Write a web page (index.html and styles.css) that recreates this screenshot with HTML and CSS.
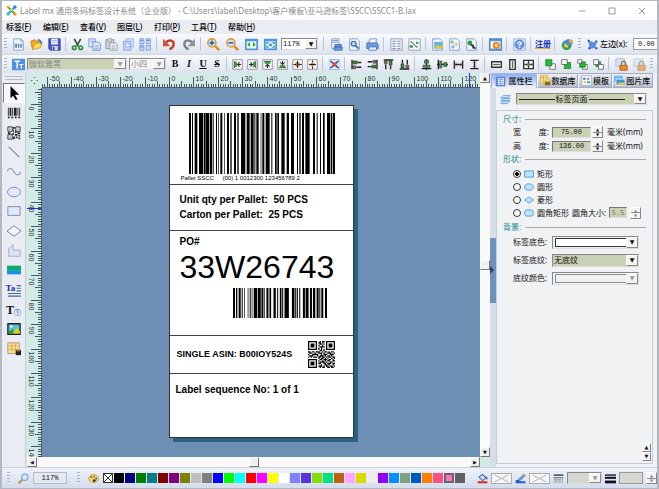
FILE: index.html
```
<!DOCTYPE html>
<html lang="zh-CN">
  <head>
    <meta charset="UTF-8" />
    <meta name="viewport" content="width=device-width, initial-scale=1.0" />
    <title>Label mx 通用条码标签设计系统</title>
    <link rel="stylesheet" href="styles.css">
  </head>
  <body>
    <svg class="sprite" aria-hidden="true">
      <symbol id="logo" viewBox="0 0 16 16"><path d="M3 3l10 10" stroke="#4caf3c" stroke-width="3"/><path d="M13 3L3 13" stroke="#2a9be8" stroke-width="3"/><circle cx="3" cy="3" r="2" fill="#f0a020"/><circle cx="13" cy="3" r="2.5" fill="#1d8fe0"/><circle cx="3" cy="13" r="2.5" fill="#48b4f0"/><circle cx="13" cy="13" r="2.5" fill="#f59a1c"/><circle cx="8" cy="7" r="2" fill="#ffd23c"/></symbol>
      <symbol id="new" viewBox="0 0 16 16"><path d="M2 1h9l3 3v11H2z" fill="#eef5ff" stroke="#7d9cc8"/><path d="M11 1v3h3" fill="#b8cdec" stroke="#7d9cc8"/><path d="M4 7v5M5.500 7v5M8 7v5M10 7v5M12 7v5" stroke="#3b5f90"/></symbol>
      <symbol id="open" viewBox="0 0 16 16"><path d="M1 4l5-2 2 2 5-1v5L3 14z" fill="#f2a526" stroke="#c67d10"/><path d="M3 14l3-7 9-2-2 7z" fill="#ffd85a" stroke="#d29a1c"/><path d="M9 2c3-1 5 0 5 3l1.500-.5L13.500 8 11 5.500h1.500C12 4 11 3 9 3z" fill="#3c86dc"/></symbol>
      <symbol id="save" viewBox="0 0 16 16"><path d="M1 1h14v14H3l-2-2z" fill="#4a58c8" stroke="#2c3aa0"/><path d="M4 1h8v7H4z" fill="#f4f6ff"/><path d="M5 3h6M5 5h6" stroke="#9aa6d8"/><path d="M5 10h7v5H5z" fill="#d6daf2"/><path d="M6 11h2v4H6z" fill="#333f98"/></symbol>
      <symbol id="cut" viewBox="0 0 16 16"><path d="M4 1l5 9M12 1L7 10" stroke="#27502c" stroke-width="2"/><circle cx="4" cy="12" r="2.200" fill="none" stroke="#2f8a34" stroke-width="2"/><circle cx="12" cy="12" r="2.200" fill="none" stroke="#2f8a34" stroke-width="2"/></symbol>
      <symbol id="copy" viewBox="0 0 16 16"><path d="M1 1h8v10H1z" fill="#dfeaff" stroke="#6c8fd0"/><path d="M6 5h7l2 2v8H6z" fill="#eff5ff" stroke="#4f7ac4"/><path d="M8 9h5M8 11h5M8 13h5M3 4h4" stroke="#6c9ae0"/></symbol>
      <symbol id="paste" viewBox="0 0 16 16"><path d="M1 2h10v11H1z" fill="#c9cdd4" stroke="#8d949e"/><path d="M4 1h4v3H4z" fill="#f2f2f2" stroke="#8d949e"/><path d="M6 6h7l2 2v7H6z" fill="#f4f5f7" stroke="#8d949e"/><path d="M8 9h5M8 11h5M8 13h5" stroke="#a6adb6"/></symbol>
      <symbol id="cards" viewBox="0 0 16 16"><path d="M5 1h9v10H5z" fill="#dce8ff" stroke="#8cabe4"/><path d="M2 4h9v11H2z" fill="#c0d5fa" stroke="#7f9fdd"/><circle cx="7" cy="9" r="2.500" fill="#fff" stroke="#7f9fdd"/></symbol>
      <symbol id="array" viewBox="0 0 16 16"><path d="M1 1h5v6H1zM9 1h5v6H9zM1 9h5v6H1zM9 9h5v6H9z" fill="#cadcff" stroke="#6f93d8"/><path d="M2 3h3M10 3h3M2 11h3" stroke="#3f6cc0"/></symbol>
      <symbol id="undo" viewBox="0 0 16 16"><path d="M3 6c4-5 11-3 10 2 0 3-3 5-5 6" fill="none" stroke="#c0402c" stroke-width="3"/><path d="M0 1v9h9z" fill="#d0523a"/></symbol>
      <symbol id="redo" viewBox="0 0 16 16"><path d="M13 6C9 1 2 3 3 8c0 3 3 5 5 6" fill="none" stroke="#7c838c" stroke-width="3"/><path d="M16 1v9H7z" fill="#8c949c"/></symbol>
      <symbol id="zin" viewBox="0 0 16 16"><path d="M9 9l6 6" stroke="#e08a28" stroke-width="3"/><circle cx="6" cy="6" r="5" fill="#cfe5fa" stroke="#e69a34" stroke-width="2"/><path d="M3 6h6M6 3v6" stroke="#2c62b0" stroke-width="2"/></symbol>
      <symbol id="zout" viewBox="0 0 16 16"><path d="M9 9l6 6" stroke="#e08a28" stroke-width="3"/><circle cx="6" cy="6" r="5" fill="#cfe5fa" stroke="#e69a34" stroke-width="2"/><path d="M3 6h6" stroke="#2c62b0" stroke-width="2"/></symbol>
      <symbol id="fitw" viewBox="0 0 16 16"><path d="M0 1h16v14H0z" fill="#4b94e4"/><path d="M2 4h12v9H2z" fill="#e8f8e8"/><path d="M3 8l3-3v6zM13 8l-3-3v6z" fill="#1d9a3c"/></symbol>
      <symbol id="fitp" viewBox="0 0 16 16"><path d="M0 1h16v14H0z" fill="#4b94e4"/><path d="M2 4h12v9H2z" fill="#d8ecff"/><path d="M3 5h3L3 8zM13 5h-3l3 3zM3 12h3L3 9zM13 12h-3l3-3z" fill="#1d9a3c"/><path d="M6 7h4v3H6z" fill="#4b94e4"/></symbol>
      <symbol id="setup" viewBox="0 0 16 16"><path d="M2 1h9v12H2z" fill="#f0f5ff" stroke="#7396ce"/><path d="M3 3h7M3 5h7" stroke="#6489c4"/><path d="M6 8h8v3H6zM5 11h10v4H5z" fill="#6c9ce0" stroke="#456fb4"/></symbol>
      <symbol id="preview" viewBox="0 0 16 16"><path d="M2 1h9l3 3v11H2z" fill="#f0f5ff" stroke="#7396ce"/><circle cx="7" cy="7" r="3" fill="#b8d4fa" stroke="#3c6cb4" stroke-width="1.500"/><path d="M9 9l4 4" stroke="#3c6cb4" stroke-width="2"/></symbol>
      <symbol id="print" viewBox="0 0 16 16"><path d="M5 1h8l-1 6H3z" fill="#f4f9ff" stroke="#5a84c4"/><path d="M1 6h13l1 3v4H1z" fill="#6b9de4" stroke="#3f69ae"/><path d="M4 11h9v4H3z" fill="#e8f2ff" stroke="#4d78bc"/></symbol>
      <symbol id="list" viewBox="0 0 16 16"><path d="M1 1h14v14H1z" fill="#f3f6fc" stroke="#7d90bc"/><path d="M3 4h4M3 7h4M3 10h4M3 13h4M9 4h4M9 7h4M9 10h4M9 13h4" stroke="#5d6f98"/></symbol>
      <symbol id="link" viewBox="0 0 16 16"><path d="M1 1h14v14H1z" fill="#f6f8fc" stroke="#8794b4"/><path d="M3 5h2l5 6h2" stroke="#222" fill="none"/><path d="M10 4l4 2-4 2zM2 9h4v3H2z" fill="#2ca43a"/></symbol>
      <symbol id="docpic" viewBox="0 0 16 16"><path d="M2 1h9l3 3v11H2z" fill="#e8f1ff" stroke="#7396ce"/><path d="M4 5h10v8H4z" fill="#58b4d8"/><path d="M4 13l4-5 3 2 3-2v5z" fill="#e6c240"/></symbol>
      <symbol id="docgrid" viewBox="0 0 16 16"><path d="M2 1h9l3 3v11H2z" fill="#f6faff" stroke="#7396ce"/><circle cx="5" cy="5" r="1.500" fill="none" stroke="#3aa450"/><circle cx="10" cy="8" r="1.500" fill="none" stroke="#dd9a2c"/><circle cx="6" cy="11" r="1.500" fill="none" stroke="#3a86d4"/></symbol>
      <symbol id="doctool" viewBox="0 0 16 16"><path d="M2 1h9l3 3v11H2z" fill="#eef4ff" stroke="#7396ce"/><circle cx="6" cy="6" r="3" fill="#2f9a3a"/><path d="M7 8l6 5M10 8v5" stroke="#333" stroke-width="2"/></symbol>
      <symbol id="window" viewBox="0 0 16 16"><path d="M0 1h16v14H0z" fill="#5d9ae8" stroke="#386cb8"/><path d="M2 4h12v9H2z" fill="#fff"/><circle cx="9" cy="9" r="3.500" fill="#ffd070" stroke="#e8861c" stroke-width="2"/></symbol>
      <symbol id="help" viewBox="0 0 16 16"><path d="M1 1h14v14H1z" fill="#e0ecfc" stroke="#86a6d8"/><circle cx="8" cy="8" r="5.500" fill="#6c9ee8" stroke="#3f72c0"/><path d="M6 7c0-3 4.500-2.500 4 0L8 8.500V10M8 11v1.500" stroke="#fff" stroke-width="1.500" fill="none"/></symbol>
      <symbol id="ie" viewBox="0 0 16 16"><circle cx="7" cy="9" r="6" fill="#3a9c4a"/><path d="M4 7c3-3 6-2 7 0l-3 5-4-1z" fill="#f0d040"/><path d="M2 5L9 1l6 5-5 4z" fill="#3c8ed8"/><circle cx="12" cy="4" r="2.500" fill="#f2a42c"/></symbol>
      <symbol id="pos" viewBox="0 0 16 16"><path d="M2 3l12 2-2 8-8 1z" fill="#5a8ee4"/><path d="M1 1h3v3H1zM12 2h3v3h-3zM2 12h3v3H2zM12 12h3v3h-3z" fill="#27509e"/></symbol>
      <symbol id="font" viewBox="0 0 16 16"><path d="M0 1h16v14H0z" fill="#4d8fe8"/><path d="M3 4h7M6.500 4v9" stroke="#fff" stroke-width="2"/><path d="M9 8h5M11.500 8v5" stroke="#fff" stroke-width="1.500"/></symbol>

      <symbol id="al" viewBox="0 0 16 16"><path d="M1 1h14v14H1z" fill="#f4f4f4" stroke="#777"/><path d="M3.500 3v10" stroke="#111"/><path d="M4 4h3v8H4z" fill="#2a9d35"/><path d="M13 8H9M11 5L8 8l3 3" stroke="#222" stroke-width="1.500" fill="none"/></symbol>
      <symbol id="at" viewBox="0 0 16 16"><path d="M1 1h14v14H1z" fill="#f4f4f4" stroke="#777"/><path d="M3 3.500h10" stroke="#111"/><path d="M4 4h8v3H4z" fill="#2a9d35"/><path d="M8 13V9M5 11l3-3 3 3" stroke="#222" stroke-width="1.500" fill="none"/></symbol>
      <symbol id="ac" viewBox="0 0 16 16"><path d="M1 1h14v14H1z" fill="#f4f4f4" stroke="#777"/><path d="M5 5h6v6H5z" fill="#c87a40"/><path d="M8 3v10M2 8h4M10 8h4" stroke="#222" stroke-width="1.500"/></symbol>
      <symbol id="am" viewBox="0 0 16 16"><path d="M1 1h14v14H1z" fill="#f4f4f4" stroke="#777"/><path d="M5 6h6v4H5z" fill="#c87a40"/><path d="M3 8h10M8 2v3M8 11v3" stroke="#222" stroke-width="1.500"/></symbol>
      <symbol id="center" viewBox="0 0 16 16"><path d="M0 1h16v14H0z" fill="#e6efff" stroke="#8095c8"/><path d="M5 5h6v6H5z" fill="#d8503c"/><path d="M2 3l4 3M14 3l-4 3M2 13l4-3M14 13l-4-3" stroke="#2444a4" stroke-width="2"/></symbol>
      <symbol id="dl" viewBox="0 0 16 16"><path d="M1.500 1v14" stroke="#222" stroke-width="2"/><path d="M3 3h6v4H3z" fill="#2a8f35" stroke="#333"/><path d="M3 10h4v4H3z" fill="#b86b4b" stroke="#333"/><path d="M15 5h-5M15 12H8" stroke="#222" stroke-width="2"/></symbol>
      <symbol id="dm" viewBox="0 0 16 16"><path d="M8 0v16M1 14h14" stroke="#222" stroke-width="2"/><path d="M5 2h6v4H5z" fill="#2a9d35" stroke="#444"/><path d="M3 9h10v3H3z" fill="#35a840" stroke="#444"/></symbol>
      <symbol id="gap" viewBox="0 0 16 16"><path d="M2 2v12M14 2v12M3 8h10" stroke="#222" stroke-width="2"/><path d="M6 5L3 8l3 3M10 5l3 3-3 3" stroke="#b86048" fill="none"/></symbol>
      <symbol id="sw" viewBox="0 0 16 16"><path d="M1 4h14v8H1z" fill="#fff" stroke="#333" stroke-width="2"/><path d="M3 8h10" stroke="#46784a" stroke-width="2"/></symbol>
      <symbol id="sb" viewBox="0 0 16 16"><path d="M1 2h14v12H1z" fill="#fff" stroke="#333" stroke-width="2"/><path d="M2 8h12M8 2v12" stroke="#333" stroke-width="2"/><path d="M6 6h4v4H6z" fill="#56885a"/></symbol>
      <symbol id="front" viewBox="0 0 16 16"><path d="M7 7h8v8H7z" fill="#fff" stroke="#444"/><path d="M1 1h9v9H1z" fill="#25bb35" stroke="#167820"/></symbol>
      <symbol id="back" viewBox="0 0 16 16"><path d="M5 5h9v9H5z" fill="#25bb35" stroke="#167820"/><path d="M1 1h8v7H1z" fill="#fff" stroke="#444"/></symbol>
      <symbol id="mid" viewBox="0 0 16 16"><path d="M8 8h7v7H8z" fill="#fff" stroke="#444"/><path d="M4 4h8v8H4z" fill="#25bb35" stroke="#167820"/><path d="M1 1h6v5H1z" fill="#fff" stroke="#444"/></symbol>
      <symbol id="down" viewBox="0 0 16 16"><path d="M4 4h7v7H4z" fill="#25bb35" stroke="#167820"/><path d="M8 8h7v7H8z" fill="#fff" stroke="#444"/><path d="M1 1h7v7H1z" fill="#fff" stroke="#444"/></symbol>
      <symbol id="lock" viewBox="0 0 16 16"><path d="M1 1h11v9H1z" fill="#d4e1fa" stroke="#9db4e0"/><path d="M8 9V7c0-4 5-4 5 0v2" fill="none" stroke="#9a6a20" stroke-width="1.500"/><path d="M6 9h9v6H6z" fill="#e58a24" stroke="#a85e10"/></symbol>

      <symbol id="cursor" viewBox="0 0 16 16"><path d="M4 0v14l3-3 3 5 2-1-3-5h5z"/></symbol>
      <symbol id="bar" viewBox="0 0 16 16"><path d="M1 2h1v9H1zM3 2h2v9H3zM6 2h1v9H6zM8 2h3v9H8zM12 2h1v9h-1zM14 2h1v9h-1zM1 12h2v2H1zM5 12h2v2H5zM9 12h2v2H9zM13 12h2v2h-2z" fill="#222"/></symbol>
      <symbol id="qrt" viewBox="0 0 16 16"><path d="M1 1h5v5H1zM10 1h5v5h-5zM1 10h5v5H1z" fill="none" stroke="#222"/><path d="M3 3h1v1H3zM12 3h1v1h-1zM3 12h1v1H3zM7 1h2v2H7zM7 4h1v3H7zM9 6h2v2H9zM1 7h3v2H1zM12 7h3v2h-3zM6 8h2v2H6zM9 9h3v2H9zM13 10h2v2h-2zM7 12h2v3H7zM10 12h2v2h-2zM13 13h2v2h-2z" fill="#222"/></symbol>
      <symbol id="line" viewBox="0 0 16 16"><path d="M2 2l12 12" stroke="#55749c" stroke-width="1.200"/></symbol>
      <symbol id="curve" viewBox="0 0 16 16"><path d="M0 7c4-6 6-2 8 1s4 6 8 0" fill="none" stroke="#7d93b8" stroke-width="1.200"/></symbol>
      <symbol id="oval" viewBox="0 0 16 16"><ellipse cx="8" cy="8" rx="7.400" ry="5.400" fill="#e0e9fc" stroke="#7185a8"/></symbol>
      <symbol id="rect" viewBox="0 0 16 16"><path d="M1 3h14v10H1z" fill="#dfe8fc" stroke="#7185a8"/></symbol>
      <symbol id="diamond" viewBox="0 0 16 16"><path d="M8 2l8 6-8 6-8-6z" fill="#f2f6fc" stroke="#60789c"/></symbol>
      <symbol id="poly" viewBox="0 0 16 16"><path d="M2 5l5-4v6h8v7H2z" fill="#dce4f6" stroke="#98a8cc"/></symbol>
      <symbol id="fillrect" viewBox="0 0 16 16"><path d="M0 3h16v6H0z" fill="#10a878"/><path d="M0 9h16v4H0z" fill="#1490e8"/></symbol>
      <symbol id="pict" viewBox="0 0 16 16"><path d="M1 2h14v12H1z" fill="#4cc4dc" stroke="#222" stroke-width="1.500"/><path d="M2 13l3-5 3 3 3-5 4 5v2z" fill="#e4cc1c"/><path d="M2 11l5-3v5H2z" fill="#2c8a40"/><circle cx="5" cy="5" r="1.500" fill="#f7f7c0"/></symbol>
      <symbol id="table" viewBox="0 0 16 16"><path d="M1 1h13v12H1z" fill="#fce6b0" stroke="#b08c44"/><path d="M2 4.500h11M2 8.500h11M5.500 2v10M9.500 2v10" stroke="#dda23c"/><path d="M10 9h6v6h-6z" fill="#222"/><path d="M11 10h4" stroke="#d8c840"/></symbol>
      <symbol id="richtext" viewBox="0 0 16 16"><path d="M11 3h5M11 6h5M11 9h5M1 12h15M1 15h15" stroke="#4a6c98" stroke-width="1.200"/></symbol>

      <symbol id="prop" viewBox="0 0 16 16"><path d="M1 1h14v14H1z" fill="#5a86d8"/><path d="M4 3h9v10H4z" fill="#dbe8ff"/><path d="M5 5h7M5 8h7M5 11h7M8 3v10" stroke="#6f9be4"/></symbol>
      <symbol id="db" viewBox="0 0 16 16"><path d="M1 1h10v11H1z" fill="#ffe9a4" stroke="#d09a28"/><path d="M1 4h10M5 1v11" stroke="#d09a28"/><path d="M7 7h8v8H7z" fill="#8a6c20"/><ellipse cx="11" cy="8" rx="4" ry="2" fill="#f0d458"/></symbol>
      <symbol id="tpl" viewBox="0 0 16 16"><path d="M1 1h14v14H1z" fill="#fff" stroke="#7fa4e0"/><path d="M3 4h4v3H3z" fill="#3c8cec"/><path d="M9 4h3v3H9z" fill="#e05c4c"/><path d="M4 9h3v3H4z" fill="#f0b030"/><path d="M9 9h4v3H9z" fill="#3ca454"/></symbol>
      <symbol id="gal" viewBox="0 0 16 16"><path d="M0 1h13v9H0z" fill="#6bbcf2"/><path d="M3 6h13v9H3z" fill="#3f92dc" stroke="#fff"/><path d="M4 14l4-4 3 2 4-2v4z" fill="#f4d23c"/></symbol>
      <symbol id="layers" viewBox="0 0 16 16"><path d="M5 2h10l-4 4H1zM5 6h10l-4 4H1zM5 10h10l-4 4H1z" fill="#c4e0fc" stroke="#4c92dc"/></symbol>
      <symbol id="s-rect" viewBox="0 0 16 12"><path d="M1 1h14v10H1z" fill="#bfe2fd" stroke="#45a0ea" stroke-width="1.500"/></symbol>
      <symbol id="s-oval" viewBox="0 0 16 12"><ellipse cx="8" cy="6" rx="7" ry="5" fill="#bfe2fd" stroke="#45a0ea" stroke-width="1.500"/></symbol>
      <symbol id="s-dia" viewBox="0 0 16 12"><path d="M8 1l7 5-7 5-7-5z" fill="#bfe2fd" stroke="#45a0ea" stroke-width="1.500"/></symbol>
      <symbol id="s-round" viewBox="0 0 16 12"><rect x="1" y="1" width="14" height="10" rx="4" fill="#bfe2fd" stroke="#45a0ea" stroke-width="1.500"/></symbol>

      <symbol id="glass" viewBox="0 0 16 16"><path d="M1 15l6-6" stroke="#c98a4c" stroke-width="3"/><circle cx="10" cy="6" r="4.500" fill="#d4eafc" stroke="#6a9ed8" stroke-width="1.500"/></symbol>
      <symbol id="palette" viewBox="0 0 16 16"><ellipse cx="8" cy="8" rx="7" ry="6" fill="#f8d868" stroke="#c08c30"/><circle cx="5" cy="6" r="1.500" fill="#d83c2c"/><circle cx="9" cy="5" r="1.500" fill="#3c9c3c"/><circle cx="12" cy="8" r="1.500" fill="#3464c8"/><circle cx="9" cy="11" r="2" fill="#222"/></symbol>
      <symbol id="bucket" viewBox="0 0 16 16"><path d="M3 6l5-4 5 5-5 4z" fill="#dce8f8" stroke="#3462a8" stroke-width="1.500"/><path d="M13 5l2 4" stroke="#2c62b4" stroke-width="2"/><path d="M1 12h14v3H1z" fill="#e02818"/></symbol>
      <symbol id="pen" viewBox="0 0 16 16"><path d="M4 10l9-8 2 2-9 8z" fill="#6eaee8" stroke="#345c98"/><path d="M11 2l3-1 1 3-2 2z" fill="#e0a050"/><path d="M1 10h5v2h9v3H1z" fill="#1c5cc4"/></symbol>
      <symbol id="dashes" viewBox="0 0 16 16"><path d="M1 3h14" stroke="#333" stroke-width="2"/><path d="M1 7h14" stroke="#333" stroke-dasharray="3 1" stroke-width="1.500"/><path d="M1 10h14M1 13h14" stroke="#555" stroke-dasharray="1 1" stroke-width="1.500"/></symbol>
      <symbol id="thick" viewBox="0 0 16 16"><path d="M0 3h16" stroke="#112" stroke-width="2"/><path d="M0 7h16" stroke="#112" stroke-width="3"/><path d="M0 13h16" stroke="#112" stroke-width="4"/></symbol>
    </svg>

    <div class="app">
      <header class="titlebar">
        <svg class="logo"><use href="#logo" /></svg>
        <h1>Label mx 通用条码标签设计系统（企业版） - C:\Users\label\Desktop\客户模板\亚马逊标签\SSCC\SSCC1-B.lax</h1>
        <div class="winbtns">
          <button aria-label="最小化"><svg viewBox="0 0 8 8"><path d="M1 4h6" /></svg></button>
          <button aria-label="最大化"><svg viewBox="0 0 8 8"><path d="M1 1h6v6H1z" /></svg></button>
          <button aria-label="关闭"><svg viewBox="0 0 8 8"><path d="M1 1l6 6M7 1L1 7" /></svg></button>
        </div>
      </header>

      <nav class="menu">
        <a href="#">标签(<u>F</u>)</a>
        <a href="#">编辑(<u>E</u>)</a>
        <a href="#">查看(<u>V</u>)</a>
        <a href="#">图层(<u>L</u>)</a>
        <a href="#">打印(<u>P</u>)</a>
        <a href="#">工具(<u>T</u>)</a>
        <a href="#">帮助(<u>H</u>)</a>
      </nav>

      <div class="toolbar">
        <i class="grip"></i>
        <div class="group">
          <button aria-label="新建"><svg><use href="#new" /></svg></button>
          <button aria-label="打开"><svg><use href="#open" /></svg></button>
          <button aria-label="保存"><svg><use href="#save" /></svg></button>
        </div>
        <div class="group snug">
          <button aria-label="剪切"><svg><use href="#cut" /></svg></button>
          <button aria-label="复制"><svg><use href="#copy" /></svg></button>
          <button aria-label="粘贴"><svg><use href="#paste" /></svg></button>
          <button aria-label="多重复制"><svg><use href="#cards" /></svg></button>
          <button aria-label="阵列"><svg><use href="#array" /></svg></button>
        </div>
        <div class="group wide">
          <button aria-label="撤销"><svg><use href="#undo" /></svg></button>
          <button aria-label="重做"><svg><use href="#redo" /></svg></button>
        </div>
        <div class="group wide">
          <button aria-label="放大"><svg><use href="#zin" /></svg></button>
          <button aria-label="缩小"><svg><use href="#zout" /></svg></button>
          <button aria-label="适合宽度"><svg><use href="#fitw" /></svg></button>
          <button aria-label="适合页面"><svg><use href="#fitp" /></svg></button>
          <span class="combo zoom"><select aria-label="缩放"><option>117%</option></select></span>
        </div>
        <div class="group">
          <button aria-label="页面设置"><svg><use href="#setup" /></svg></button>
          <button aria-label="打印预览"><svg><use href="#preview" /></svg></button>
          <button aria-label="打印"><svg><use href="#print" /></svg></button>
        </div>
        <div class="group">
          <button aria-label="数据列表"><svg><use href="#list" /></svg></button>
          <button aria-label="数据连接"><svg><use href="#link" /></svg></button>
        </div>
        <div class="group snug">
          <button aria-label="导出图片"><svg><use href="#docpic" /></svg></button>
          <button aria-label="网格"><svg><use href="#docgrid" /></svg></button>
          <button aria-label="选项"><svg><use href="#doctool" /></svg></button>
        </div>
        <div class="group"><button aria-label="窗口"><svg><use href="#window" /></svg></button></div>
        <div class="group"><button aria-label="帮助"><svg><use href="#help" /></svg></button></div>
        <div class="group"><button class="reg">注册</button></div>
        <div class="group"><button aria-label="网站"><svg><use href="#ie" /></svg></button></div>
        <div class="posbar">
          <i class="grip"></i>
          <svg><use href="#pos" /></svg>
          <label for="left">左边(x):</label>
          <input id="left" type="text" value="0.00 mm" />
        </div>
      </div>

      <div class="toolbar second">
        <i class="grip"></i>
        <div class="group">
          <button aria-label="字体"><svg><use href="#font" /></svg></button>
          <span class="combo face"><select aria-label="字体名称" disabled><option>微软雅黑</option></select></span>
          <span class="combo size"><select aria-label="字号" disabled><option>小四</option></select></span>
          <button class="fmt"><b>B</b></button>
          <button class="fmt"><b><i>I</i></b></button>
          <button class="fmt"><b><u>U</u></b></button>
          <button class="fmt"><b><s>S</s></b></button>
        </div>
        <div class="group tight">
          <button aria-label="左对齐"><svg><use href="#al" /></svg></button>
          <button aria-label="右对齐"><svg class="r180"><use href="#al" /></svg></button>
          <button aria-label="顶对齐"><svg><use href="#at" /></svg></button>
          <button aria-label="底对齐"><svg class="r180"><use href="#at" /></svg></button>
          <button aria-label="水平居中"><svg><use href="#ac" /></svg></button>
          <button aria-label="垂直居中"><svg><use href="#am" /></svg></button>
        </div>
        <div class="group small"><button aria-label="页面居中"><svg><use href="#center" /></svg></button></div>
        <div class="group small">
          <button aria-label="靠左"><svg><use href="#dl" /></svg></button>
          <button aria-label="靠右"><svg class="r180"><use href="#dl" /></svg></button>
          <button aria-label="靠上"><svg class="r90"><use href="#dl" /></svg></button>
          <button aria-label="靠下"><svg class="r270"><use href="#dl" /></svg></button>
        </div>
        <div class="group small">
          <button aria-label="中线对齐"><svg><use href="#dm" /></svg></button>
          <button aria-label="横中线对齐"><svg class="r90"><use href="#dm" /></svg></button>
          <button aria-label="水平间距"><svg><use href="#gap" /></svg></button>
          <button aria-label="垂直间距"><svg class="r90"><use href="#gap" /></svg></button>
        </div>
        <div class="group small">
          <button aria-label="等宽"><svg><use href="#sw" /></svg></button>
          <button aria-label="等高"><svg class="r90"><use href="#sw" /></svg></button>
          <button aria-label="等大"><svg><use href="#sb" /></svg></button>
        </div>
        <div class="group small">
          <button aria-label="置顶"><svg><use href="#front" /></svg></button>
          <button aria-label="置底"><svg><use href="#back" /></svg></button>
          <button aria-label="上移一层"><svg><use href="#mid" /></svg></button>
          <button aria-label="下移一层"><svg><use href="#down" /></svg></button>
        </div>
        <div class="group">
          <button aria-label="锁定"><svg><use href="#lock" /></svg></button>
          <button aria-label="解锁"><svg class="dim"><use href="#lock" /></svg></button>
        </div>
        <i class="grip"></i>
      </div>

      <main class="work">
        <aside class="toolbox">
          <i class="handle"></i>
          <button class="on" aria-label="选择"><svg><use href="#cursor" /></svg></button>
          <button aria-label="条码"><svg><use href="#bar" /></svg></button>
          <button aria-label="二维码"><svg><use href="#qrt" /></svg></button>
          <button aria-label="直线"><svg><use href="#line" /></svg></button>
          <button aria-label="曲线"><svg><use href="#curve" /></svg></button>
          <button aria-label="椭圆"><svg><use href="#oval" /></svg></button>
          <button aria-label="矩形"><svg><use href="#rect" /></svg></button>
          <button aria-label="菱形"><svg><use href="#diamond" /></svg></button>
          <button aria-label="多边形"><svg><use href="#poly" /></svg></button>
          <button aria-label="填充"><svg><use href="#fillrect" /></svg></button>
          <button class="rich"><svg><use href="#richtext" /></svg><span>Ta</span></button>
          <button class="plain">T<small>①</small></button>
          <button aria-label="图片"><svg><use href="#pict" /></svg></button>
          <button aria-label="表格"><svg><use href="#table" /></svg></button>
        </aside>

        <section class="editor">
          <div class="corner">⁘</div>
          <svg class="hruler" id="hruler"></svg>
          <svg class="vruler" id="vruler"></svg>
          <div class="canvas">
            <article class="sheet">
              <div class="sec sscc">
                <svg id="code1" class="code1" viewBox="0 0 438 10" preserveAspectRatio="none"></svg>
                <p><small>Pallet SSCC</small><span>(00) 1 0012300 123456789 2</span></p>
              </div>
              <div class="sec qty">
                <p>Unit qty per Pallet:&nbsp; 50 PCS</p>
                <p>Carton per Pallet:&nbsp; 25 PCS</p>
              </div>
              <div class="sec po">
                <p>PO#</p>
                <strong>33W26743</strong>
                <svg id="code2" class="code2" viewBox="0 0 281 10" preserveAspectRatio="none"></svg>
              </div>
              <div class="sec asin">
                <p>SINGLE ASIN: B00IOY524S</p>
                <svg id="qr" class="qr" viewBox="0 0 21 21"></svg>
              </div>
              <div class="sec seq"><p>Label sequence No: 1 of 1</p></div>
            </article>
          </div>
          <div class="vscroll">
            <button class="up" aria-label="向上"></button>
            <i class="thumb"></i>
            <button class="down" aria-label="向下"></button>
          </div>
          <div class="hscroll">
            <button class="left" aria-label="向左"></button>
            <i class="thumb"></i>
            <button class="right" aria-label="向右"></button>
          </div>
        </section>

        <div class="splitter"><button aria-label="收起"></button></div>

        <aside class="panel">
          <div class="tabs">
            <button class="on"><svg><use href="#prop" /></svg>属性栏</button>
            <button><svg><use href="#db" /></svg>数据库</button>
            <button><svg><use href="#tpl" /></svg>模板</button>
            <button><svg><use href="#gal" /></svg>图片库</button>
          </div>
          <div class="pages">
            <svg><use href="#layers" /></svg>
            <span class="combo"><select aria-label="对象"><option>标签页面</option></select></span>
          </div>
          <form class="props">
            <h2>尺寸:</h2>
            <div class="row">
              <label for="w"><span>宽</span><span>度:</span></label>
              <input id="w" type="text" value="75.00" /><i class="spin"></i>
              <span class="unit">毫米(mm)</span>
            </div>
            <div class="row">
              <label for="h"><span>高</span><span>度:</span></label>
              <input id="h" type="text" value="136.00" /><i class="spin"></i>
              <span class="unit">毫米(mm)</span>
            </div>
            <h2>形状:</h2>
            <div class="shapes">
              <label><input type="radio" name="shape" checked /><svg><use href="#s-rect" /></svg>矩形</label>
              <label><input type="radio" name="shape" /><svg><use href="#s-oval" /></svg>圆形</label>
              <label><input type="radio" name="shape" /><svg><use href="#s-dia" /></svg>菱形</label>
              <div class="round">
                <label><input type="radio" name="shape" /><svg><use href="#s-round" /></svg>圆角矩形</label>
                <label for="rad">圆角大小:</label>
                <input id="rad" type="text" value="5.5" disabled /><i class="spin"></i>
              </div>
            </div>
            <h2>背景:</h2>
            <div class="row back">
              <label for="bc">标签底色:</label>
              <span class="combo white"><select id="bc"><option></option></select></span>
            </div>
            <div class="row back">
              <label for="bt">标签底纹:</label>
              <span class="combo"><select id="bt"><option>无底纹</option></select></span>
            </div>
            <div class="row back">
              <label for="tc">底纹颜色:</label>
              <span class="combo white off"><select id="tc" disabled><option></option></select></span>
            </div>
            <i class="pager"></i>
          </form>
        </aside>
      </main>

      <footer class="status">
        <i class="grip"></i>
        <svg><use href="#glass" /></svg>
        <output class="pct">117%</output>
        <i class="grip"></i>
        <svg><use href="#palette" /></svg>
        <div class="swatches" id="swatches"></div>
        <div class="strokes">
          <svg><use href="#bucket" /></svg>
          <svg class="none" viewBox="0 0 22 10" preserveAspectRatio="none"><path d="M3 1l16 8M19 1L3 9" /></svg>
          <svg><use href="#pen" /></svg>
          <svg class="none" viewBox="0 0 22 10" preserveAspectRatio="none"><path d="M3 1l16 8M19 1L3 9" /></svg>
          <svg><use href="#dashes" /></svg>
          <span class="combo"><select aria-label="线型" disabled><option></option></select></span>
          <svg><use href="#thick" /></svg>
          <input type="text" aria-label="线宽" disabled /><i class="spin"></i>
        </div>
      </footer>
    </div>
    <script src="app.js"></script>
  </body>
</html>
```
FILE: styles.css
```
* {
  box-sizing: border-box;
}
html {
  font-size: 8px;
}
body {
  margin: 0;
  font-family: "Noto Sans", "Noto Sans CJK SC", sans-serif;
  font-size: 8px;
  line-height: 10px;
  color: #111;
  background: #fff;
}
button,
input,
select {
  margin: 0;
  padding: 0;
  border: 0;
  border-radius: 0;
  background: none;
  font: inherit;
  color: inherit;
  outline: none;
}
select {
  appearance: none;
}
h1,
h2,
p {
  margin: 0;
  font-size: inherit;
}
h1,
h2 {
  font-weight: normal;
}
svg {
  flex: none;
  display: block;
}
.sprite {
  position: absolute;
  width: 0;
  height: 0;
}
.app {
  display: flex;
  flex-direction: column;
  height: 100vh;
  border: 1px solid #b4b8be;
  border-width: 1px 2px;
}

/* title and menu */
.titlebar {
  display: flex;
  align-items: center;
  height: 19px;
  padding-left: 4px;
  background: #fff;
  color: #8a8a8a;
}
.titlebar .logo {
  width: 11px;
  height: 11px;
}
.titlebar h1 {
  flex: 1;
  margin-left: 3px;
  white-space: nowrap;
}
.winbtns {
  display: flex;
}
.winbtns button {
  width: 30px;
}
.winbtns svg {
  width: 8px;
  height: 8px;
  margin: 0 auto;
  fill: none;
  stroke: #999;
}
.menu {
  display: flex;
  align-items: center;
  gap: 11px;
  height: 14px;
  padding-left: 4px;
  background: #e9ecf1;
  font-weight: 500;
}
.menu a {
  width: 26px;
  white-space: nowrap;
  color: #000;
  text-decoration: none;
}

/* toolbars */
.toolbar {
  display: flex;
  align-items: center;
  height: 20px;
  background: linear-gradient(#f8fafd, #dde3ee);
  overflow: hidden;
}
.toolbar.second {
  height: 19px;
  border-top: 1px solid #d3dae6;
}
.grip {
  flex: none;
  width: 3px;
  height: 12px;
  margin: 0 2px;
  background: repeating-linear-gradient(#a9b3c8 0 1px, transparent 1px 3px);
}
.group {
  display: flex;
  align-items: center;
  flex: none;
}
.group + .group::before {
  content: "";
  width: 1px;
  height: 14px;
  margin: 0 3px 0 2px;
  background: #bcc5d4;
}
.group button {
  display: flex;
  align-items: center;
  justify-content: center;
  width: 18px;
  height: 16px;
}
.snug button {
  width: 17px;
}
.wide button {
  width: 19px;
}
.small button {
  width: 16px;
}
.tight button {
  width: 15px;
}
.group svg {
  width: 13px;
  height: 13px;
}
.small svg,
.tight svg {
  width: 11px;
  height: 11px;
}
.r90 {
  transform: rotate(90deg);
}
.r180 {
  transform: rotate(180deg);
}
.r270 {
  transform: rotate(270deg);
}
.dim {
  opacity: 0.6;
}
.group .reg {
  color: #1a35b8;
  font-weight: bold;
  text-decoration: underline;
  text-decoration-color: #e8b040;
}
.group .fmt {
  width: 14px;
  font: 10px/12px "Liberation Serif", serif;
}
.combo {
  position: relative;
  display: flex;
  height: 12px;
  border: 1px solid #888;
  border-right-color: #ddd;
  border-bottom-color: #ddd;
  background: #c9d2b4;
}
.combo select {
  flex: 1;
  min-width: 0;
  padding-left: 1px;
  line-height: 10px;
}
.combo::after {
  content: "▼";
  position: absolute;
  top: 0;
  right: 0;
  bottom: 0;
  width: 10px;
  border: 1px solid #888;
  border-top-color: #fff;
  border-left-color: #fff;
  background: #f4f4f4;
  font: 6px/8px "DejaVu Sans", sans-serif;
  text-align: center;
  pointer-events: none;
}
.zoom {
  width: 37px;
  margin: 0 3px 0 1px;
  background: #fff;
  font-family: "Liberation Mono", monospace;
  font-size: 7px;
}
.face {
  width: 100px;
}
.size {
  width: 37px;
  margin: 0 2px;
  background: #f4f4f4;
}
.second select {
  opacity: 1;
  color: #888;
}
.second .combo::after,
.off::after,
.status .combo::after {
  color: #999;
}
.posbar {
  display: flex;
  align-items: center;
  flex: 1;
  min-width: 0;
}
.posbar svg {
  width: 11px;
  height: 11px;
  margin: 0 2px 0 4px;
}
.posbar label {
  flex: none;
  width: 33px;
  font-weight: 500;
  white-space: nowrap;
}
.posbar input {
  flex: 1;
  min-width: 0;
  height: 12px;
  padding-left: 4px;
  border: 1px solid #999;
  border-right: 0;
  background: #fff;
  font-family: "Liberation Mono", monospace;
  font-size: 7px;
}

/* work area */
.work {
  display: flex;
  flex: 1;
  min-height: 0;
  background: #e6e9ee;
}
.toolbox {
  display: flex;
  flex-direction: column;
  align-items: center;
  width: 24px;
  border-right: 1px solid #c6ccd6;
  background: #e9ecf2;
}
.handle {
  width: 18px;
  height: 4px;
  margin: 3px 0;
  border: 1px solid #b5bac4;
  border-width: 1px 0;
}
.toolbox button {
  display: flex;
  align-items: center;
  justify-content: center;
  width: 22px;
  height: 20px;
  line-height: 12px;
}
.toolbox button:nth-of-type(3n) {
  height: 19px;
}
.toolbox .on {
  border: 1px solid #777;
  border-right-color: #fff;
  border-bottom-color: #fff;
  background: #f7f8fa;
}
.toolbox svg {
  width: 14px;
  height: 14px;
}
.toolbox .rich {
  position: relative;
  font: bold 9px/10px "Liberation Serif", serif;
  color: #1c2cb4;
}
.rich span {
  position: absolute;
  top: 3px;
  left: 3px;
}
.toolbox .plain {
  font: bold 12px/12px "Liberation Serif", serif;
}
.plain small {
  align-self: flex-end;
  font-size: 7px;
  color: #4a90b0;
}
.editor {
  display: grid;
  grid-template: 15px 1fr 10px / 15px 1fr 10px;
  flex: 1;
  min-width: 0;
  padding-left: 1px;
  background: #d3ebe7;
}
.corner {
  font-size: 9px;
  line-height: 15px;
  text-align: center;
}
.hruler,
.vruler {
  width: 100%;
  height: 100%;
  overflow: hidden;
  font: 7px "Liberation Sans", sans-serif;
  fill: #333;
}
.hruler {
  grid-area: 1 / 2;
  border-bottom: 1px solid #4b5d6c;
}
.vruler {
  grid-area: 2 / 1;
  border-right: 1px solid #4b5d6c;
}
.canvas {
  grid-area: 2 / 2;
  overflow: hidden;
  padding-top: 17px;
  background: #6c8fb3;
}
.vscroll {
  grid-area: 1 / 3 / 3 / 4;
  display: flex;
  flex-direction: column;
  align-items: stretch;
  background: #fafafa;
}
.hscroll {
  grid-area: 3 / 1 / 4 / 3;
  display: flex;
  background: #faf9f7;
}
.vscroll button,
.hscroll button,
.thumb {
  width: 10px;
  height: 10px;
  border: 1px solid #777;
  border-top-color: #fff;
  border-left-color: #fff;
  background: #f0f0f0;
  font: 5px/8px "DejaVu Sans", sans-serif;
}
.up::before {
  content: "▲";
}
.down::before {
  content: "▼";
}
.left::before {
  content: "◀";
}
.right::before {
  content: "▶";
}
.thumb {
  margin: auto;
}

/* label sheet */
.sheet {
  width: 185px;
  margin: 0 auto;
  border: 1px solid #333;
  background: #fff;
  box-shadow: 4px 4px 0 #2e607f;
  font: bold 10px/15px "Liberation Sans", sans-serif;
  color: #000;
}
.sec {
  border-bottom: 1px solid #444;
}
.sec:last-child {
  border: 0;
}
.sscc {
  height: 79px;
  padding: 7px 11px 0;
}
.code1 {
  width: 146px;
  height: 61px;
  margin-left: 8px;
}
.sscc p {
  display: flex;
  gap: 7px;
  font-size: 6px;
  line-height: 9px;
  font-weight: normal;
}
.sscc small {
  width: 35px;
  font-size: 6px;
  white-space: nowrap;
}
.qty {
  height: 46px;
  padding: 7px 10px;
}
.po {
  height: 105px;
  padding: 3px 10px;
}
.po strong {
  display: block;
  font-weight: normal;
  font-size: 32px;
  line-height: 36px;
}
.code2 {
  width: 94px;
  height: 30px;
  margin: 3px 0 0 53px;
}
.asin {
  display: flex;
  align-items: center;
  justify-content: space-between;
  height: 38px;
  padding: 0 18px 0 7px;
  font-size: 9px;
}
.qr {
  width: 27px;
  height: 27px;
}
.seq {
  height: 63px;
  padding: 8px 6px;
}

/* right panel */
.splitter {
  display: flex;
  align-items: center;
  width: 6px;
  background: #d6dee8;
}
.splitter button {
  width: 6px;
  height: 65px;
  background: #6f92bc;
}
.splitter button::before {
  content: "";
  display: block;
  border: 4px solid transparent;
  border-left-color: #24476e;
  border-right: 0;
}
.panel {
  display: flex;
  flex-direction: column;
  width: 161px;
  padding-right: 4px;
  background: #f1f2f4;
}
.tabs {
  display: flex;
  height: 15px;
  margin-left: -5px;
  background: #dfe3ea;
}
.tabs button {
  display: flex;
  align-items: center;
  justify-content: center;
  flex: 1 1 auto;
  gap: 1px;
  border: 1px solid #a3aab8;
  border-left-color: #fff;
  background: linear-gradient(#eceef3, #b9bfcd);
  font-weight: 500;
  white-space: nowrap;
}
.tabs .on {
  gap: 2px;
  flex-grow: 2;
  background: linear-gradient(#8db0f4, #f1f2f4);
  border-color: #a3b8e4;
  border-bottom: 0;
}
.tabs svg,
.pages svg {
  width: 11px;
  height: 11px;
}
.pages {
  display: flex;
  align-items: center;
  gap: 5px;
  height: 22px;
  padding: 0 6px 0 4px;
}
.pages .combo {
  flex: 1;
}
.pages select {
  padding: 0 20px 0 0;
  text-align-last: center;
  background:
    linear-gradient(#222, #222) 2px 5px / 36px 1px no-repeat,
    linear-gradient(#222, #222) 72px 5px / 36px 1px no-repeat;
}
.props {
  position: relative;
  display: flex;
  flex-direction: column;
  flex: 1;
  margin: 0 0 3px;
  padding: 2px 6px 4px;
  border: 1px solid #c5ccd6;
}
.props h2 {
  display: flex;
  align-items: center;
  gap: 4px;
  height: 12px;
  color: #1a8a8a;
}
.props h2::after {
  content: "";
  flex: 1;
  height: 1px;
  background: #aaa;
}
.row {
  display: flex;
  align-items: center;
  height: 14px;
  padding-left: 10px;
}
.row label {
  display: flex;
  justify-content: space-between;
  flex: none;
  width: 36px;
  margin-right: 3px;
  white-space: nowrap;
}
.row input,
.round input[type="text"] {
  width: 39px;
  height: 11px;
  border: 1px solid #777;
  border-right-color: #ddd;
  border-bottom-color: #ddd;
  background: #c9d2b4;
  font-family: "Liberation Mono", monospace;
  font-size: 7px;
  text-align: center;
}
.spin {
  width: 11px;
  height: 12px;
  margin-left: 1px;
  border: 1px solid #888;
  border-top-color: #fff;
  border-left-color: #fff;
  background: linear-gradient(#888, #888) 0 50% / 100% 1px no-repeat #f3f3f3;
  font: normal 4px/5px "DejaVu Sans", sans-serif;
  text-align: center;
}
.spin::before {
  content: "▲";
  display: block;
}
.spin::after {
  content: "▼";
  display: block;
}
.unit {
  margin-left: 4px;
}
.shapes {
  display: grid;
  grid-auto-rows: 13px;
  margin: 2px 0;
  padding-left: 10px;
}
.shapes label {
  display: flex;
  align-items: center;
  gap: 3px;
  white-space: nowrap;
}
.shapes svg {
  width: 10px;
  height: 8px;
}
.shapes input[type="radio"] {
  appearance: none;
  width: 8px;
  height: 8px;
  border: 1px solid #333;
  border-radius: 50%;
  background: #fff;
}
.shapes input:checked {
  background: radial-gradient(#000 0 2px, #fff 2px);
}
.round {
  display: flex;
  align-items: center;
  gap: 3px;
}
.round input[type="text"] {
  width: 18px;
  color: #777;
}
.round .spin {
  margin: 0;
  color: #888;
}
.row.back {
  height: 18px;
}
.back .combo {
  width: 87px;
  height: 13px;
}
.combo.white {
  background: #f1f2f4;
}
.white select {
  margin: 1px 11px 1px 2px;
  border: 1px solid #333;
  background: #fff;
}
.off select {
  border-color: #666;
  background: #f0f0f0;
}
.pager {
  align-self: flex-end;
  display: grid;
  width: 9px;
  margin: auto -5px -2px 0;
  font: normal 5px/9px "DejaVu Sans", sans-serif;
  text-align: center;
}
.pager::before,
.pager::after {
  border: 1px solid #888;
  border-top-color: #fff;
  border-left-color: #fff;
  background: #f4f4f4;
  line-height: 7px;
}
.pager::before {
  content: "▲";
}
.pager::after {
  content: "▼";
}

/* status bar */
.status {
  display: flex;
  align-items: center;
  height: 21px;
  padding-left: 3px;
  border-top: 1px solid #c8d0dc;
  background: linear-gradient(#eef2fa, #d4dced);
}
.status svg {
  width: 11px;
  height: 11px;
}
.status .grip + svg {
  margin: 0 4px 0 6px;
}
.pct {
  width: 34px;
  height: 12px;
  margin-right: 8px;
  border: 1px solid #b6bcc6;
  background: #e4e8ef;
  font-family: "Liberation Mono", monospace;
  font-size: 7px;
  text-align: center;
}
.swatches {
  display: flex;
  gap: 1px;
}
.swatches button {
  width: 10px;
  height: 10px;
}
.swatches .nofill {
  border: 1px solid #333;
  background:
    linear-gradient(45deg, transparent 46%, #333 46% 54%, transparent 54%),
    linear-gradient(-45deg, #fff 46%, #333 46% 54%, #fff 54%);
}
.swatches .sel {
  border: 2px solid #666;
}
.strokes {
  display: flex;
  align-items: center;
  gap: 3px;
  flex: 1;
  min-width: 0;
  padding-left: 12px;
}
.strokes .none {
  width: 21px;
  height: 11px;
  border: 1px solid #aaa;
  background: #f6f6f6;
  stroke: #aaa;
}
.strokes .combo {
  flex: 3 1 0;
  background: #d5d8ce;
}
.strokes input {
  flex: 2 1 0;
  min-width: 0;
  height: 12px;
  border: 1px solid #999;
  background: #d5d8ce;
}
.strokes .spin {
  flex: none;
  margin: 0;
  color: #888;
}
```
FILE: app.js
```
const NS = 'http://www.w3.org/2000/svg'

function add(parent, tag, attrs, text) {
  const el = document.createElementNS(NS, tag)
  for (const key in attrs) el.setAttribute(key, attrs[key])
  if (text !== undefined) el.textContent = text
  parent.appendChild(el)
  return el
}

// rulers, 1mm = 2.445px at 117%
const MM = 2.445
const SIZE = 14

function ruler(svg, vertical, zero, from, to, mark) {
  let d = ''
  for (let mm = from; mm <= to; mm++) {
    const p = Math.round(zero + mm * MM) + 0.5
    const len = mm % 10 === 0 ? 10 : mm % 5 === 0 ? 6 : 3
    d += vertical ? `M${SIZE - len} ${p}H${SIZE}` : `M${p} ${SIZE - len}V${SIZE}`
    if (mm % 10 === 0) {
      const t = vertical ? `translate(2 ${p + 2}) rotate(90)` : `translate(${p + 2} 8)`
      add(svg, 'text', { transform: t }, mm)
    }
  }
  add(svg, 'path', { d, stroke: '#4a555c', fill: 'none' })
  const m = vertical ? `M0 ${mark}H15` : `M${mark} 0V15`
  add(svg, 'path', { d: m, stroke: '#2a2af0' })
}
ruler(document.getElementById('hruler'), false, 127, -52, 126, 427.5)
ruler(document.getElementById('vruler'), true, 16, -6, 144, 120.5)

// bars as [start, width]
const code1 = [
  [0, 6], [9, 3], [17, 8], [30, 13], [45, 4], [50, 11], [63, 6], [71, 3], [81, 3], [87, 2],
  [94, 6], [105, 2], [114, 6], [124, 4], [135, 6], [145, 4], [156, 12], [170, 2], [174, 8],
  [185, 9], [196, 3], [202, 7], [215, 2], [220, 6], [230, 12], [247, 3], [258, 5], [265, 5],
  [277, 10], [293, 7], [306, 9], [324, 3], [331, 4], [339, 6], [349, 13], [372, 6], [383, 3],
  [393, 3], [402, 5], [414, 9], [425, 4], [431, 7],
]
const code2 = [
  [0, 6], [9, 4], [17, 6], [26, 3], [33, 2], [44, 2], [50, 3], [56, 2], [62, 10], [74, 9],
  [85, 6], [93, 2], [100, 6], [109, 5], [121, 7], [132, 3], [140, 5], [147, 3], [154, 13],
  [176, 8], [186, 3], [191, 3], [198, 3], [209, 6], [217, 9], [230, 6], [239, 7], [250, 6],
  [258, 3], [264, 6], [275, 6],
]
function bars(id, list) {
  const d = list.map(([x, w]) => `M${x} 0h${w}v10h-${w}z`).join('')
  add(document.getElementById(id), 'path', { d })
}
bars('code1', code1)
bars('code2', code2)

const qr = [
  '111111100101101111111',
  '100000101101001000001',
  '101110100110101011101',
  '101110101001001011101',
  '101110100111101011101',
  '100000101010001000001',
  '111111101010101111111',
  '000000000110100000000',
  '110110111001011010110',
  '011001001110100111001',
  '100111110010111001110',
  '011100010111010110100',
  '101011101101101011011',
  '000000001011010100101',
  '111111100110111011010',
  '100000101001010110011',
  '101110100111101001100',
  '101110101100110111011',
  '101110100010011010010',
  '100000101110101101101',
  '111111100101100110110',
]
let q = ''
qr.forEach((row, y) => {
  ;[...row].forEach((c, x) => {
    if (c === '1') q += `M${x} ${y}h1v1h-1z`
  })
})
add(document.getElementById('qr'), 'path', { d: q })

const colors = [
  '#000000', '#000080', '#008000', '#008080', '#800000', '#800080', '#808000', '#c0c0c0',
  '#808080', '#0000ff', '#00ff00', '#00ffff', '#ff0000', '#ff00ff', '#ffff00', '#ffffff',
  '#8080ff', '#5a32dc', '#80e000', '#00e080', '#c06010', '#ffa4ff', '#dada00', '#eeeeee',
  '#9000ff', '#0090ff', '#80a080', '#0058c0', '#ff8000', '#ff5080', '#ff70c8', '#606060',
]
const box = document.getElementById('swatches')
const none = document.createElement('button')
none.className = 'nofill'
none.setAttribute('aria-label', '无')
box.appendChild(none)
colors.forEach(c => {
  const b = document.createElement('button')
  b.style.background = c
  b.setAttribute('aria-label', c)
  if (c === '#ff70c8') b.className = 'sel'
  box.appendChild(b)
})
```
